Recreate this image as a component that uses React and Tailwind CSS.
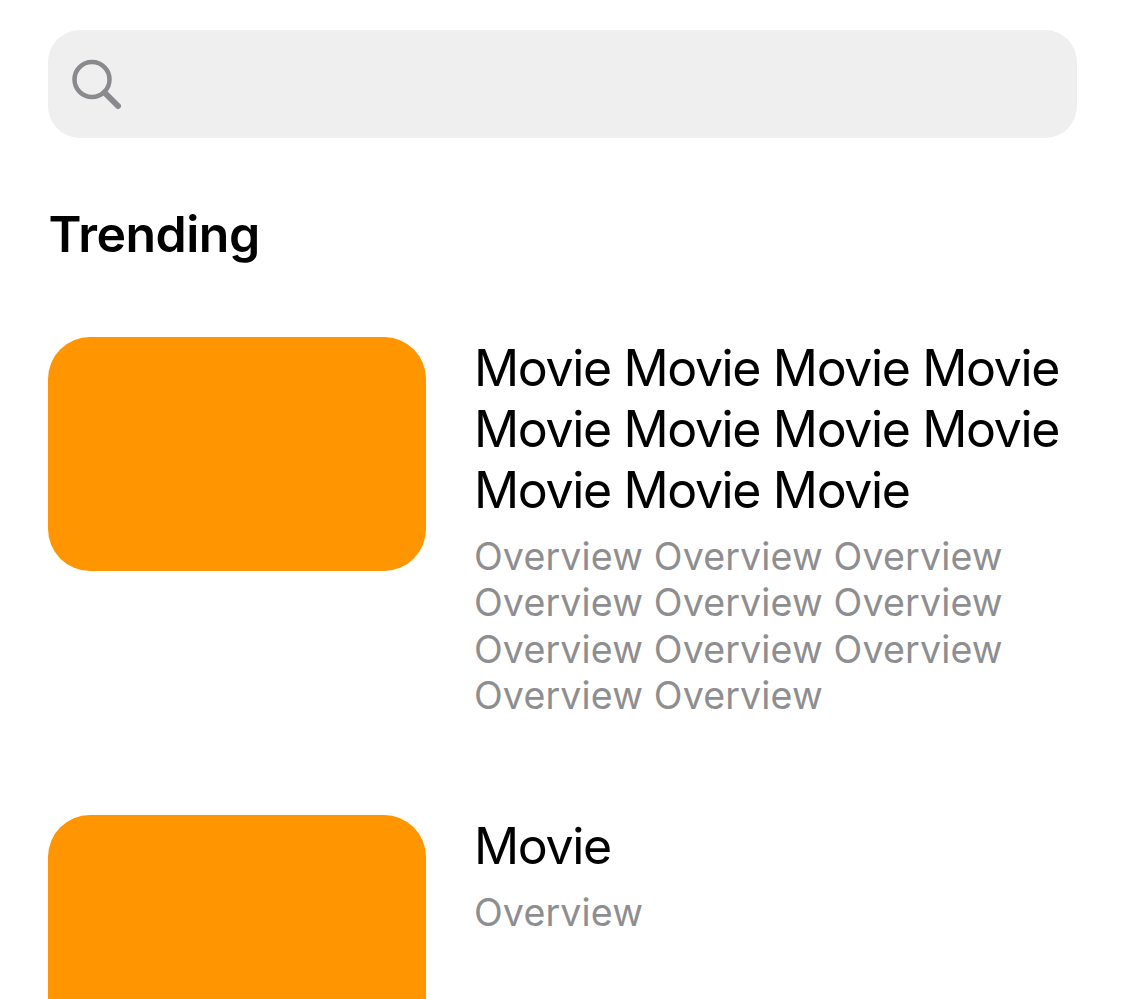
function Row({ title, overview, h }) {
  return (
    <div className={`flex items-start ${h}`}>
      <div className="w-[378px] h-[234px] shrink-0 rounded-[42px] bg-[#ff9500]" />
      <div className="ml-[48px] w-[603px] flex flex-col pt-[1px] whitespace-nowrap">
        <div className="text-[50px] leading-[61px] text-black tracking-[-1.36px]">{title}</div>
        <div className="mt-[12.5px] text-[37.6px] leading-[46.5px] text-[#8e8e90] tracking-[0.14px]">{overview}</div>
      </div>
    </div>
  );
}

export default function App() {
  return (
    <div className="w-[1125px] h-[999px] overflow-hidden bg-white px-[48px] pt-[30px] font-['Inter','Liberation_Sans',sans-serif]">
      <div className="h-[108px] w-[1029px] rounded-[32px] bg-[#efefef] flex items-center pl-[23px]">
        <svg width="50" height="50" viewBox="0 0 50 50" fill="none" stroke="#8a8a8e" strokeWidth="4.5" strokeLinecap="round">
          <circle cx="21" cy="20.5" r="17.5" />
          <path d="M33.5 33.5 L47 47" strokeWidth="6" />
        </svg>
      </div>
      <div className="mt-[66px] ml-[0.5px] text-[50px] leading-[60px] font-semibold text-black tracking-[-0.5px]">Trending</div>
      <div className="mt-[73px] flex flex-col">
        <Row h="h-[478px]" title={<>Movie Movie Movie Movie<br />Movie Movie Movie Movie<br />Movie Movie Movie</>} overview={<>Overview Overview Overview<br />Overview Overview Overview<br />Overview Overview Overview<br />Overview Overview</>} />
        <Row h="h-[234px]" title="Movie" overview="Overview" />
      </div>
    </div>
  );
}
